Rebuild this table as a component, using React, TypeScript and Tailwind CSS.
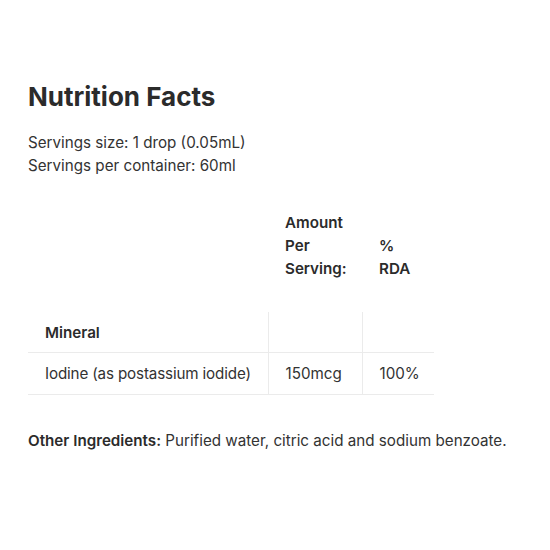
import React from "react";

const rows = [{ name: "Iodine (as postassium iodide)", amount: "150mcg", rda: "100%" }];

export default function App() {
  return (
    <div className="w-[550px] h-[550px] bg-white px-[28px] pt-[82px] text-[#333333]" style={{ fontFamily: "Inter, 'Noto Sans', sans-serif" }}>
      <h1 className="text-[26px] font-bold leading-[30px] text-[#2b2b2b]">Nutrition Facts</h1>
      <div className="mt-[19px] text-[15.2px] leading-[23px]">
        <p>Servings size: 1 drop (0.05mL)</p>
        <p>Servings per container: 60ml</p>
      </div>

      <table className="mt-[13px] w-[406px] table-fixed border-collapse text-[15.2px] leading-[23px] whitespace-nowrap">
        <colgroup>
          <col className="w-[240px]" />
          <col className="w-[94px]" />
          <col className="w-[72px]" />
        </colgroup>
        <thead>
          <tr>
            <th />
            <th className="px-[17px] pt-[21px] pb-[32px] text-left align-bottom font-semibold text-[#2b2b2b]">
              Amount<br />Per<br />Serving:
            </th>
            <th className="px-[17px] pt-[21px] pb-[32px] text-left align-bottom font-semibold text-[#2b2b2b]">
              %<br />RDA
            </th>
          </tr>
        </thead>
        <tbody>
          <tr className="border-b border-[#ebebeb]">
            <td className="h-[40px] px-[17px] pt-[2px] font-semibold text-[#2b2b2b]">Mineral</td>
            <td className="border-l border-[#ebebeb]" />
            <td className="border-l border-[#ebebeb]" />
          </tr>
          {rows.map((r) => (
            <tr key={r.name} className="border-b border-[#ebebeb]">
              <td className="h-[42px] px-[17px] tracking-[-0.15px]">{r.name}</td>
              <td className="border-l border-[#ebebeb] px-[17px]">{r.amount}</td>
              <td className="border-l border-[#ebebeb] px-[17px]">{r.rda}</td>
            </tr>
          ))}
        </tbody>
      </table>

      <p className="mt-[34px] text-[15.2px] leading-[23px] whitespace-nowrap">
        <span className="font-semibold text-[#2b2b2b]">Other Ingredients:</span> Purified water, citric acid and sodium benzoate.
      </p>
    </div>
  );
}
